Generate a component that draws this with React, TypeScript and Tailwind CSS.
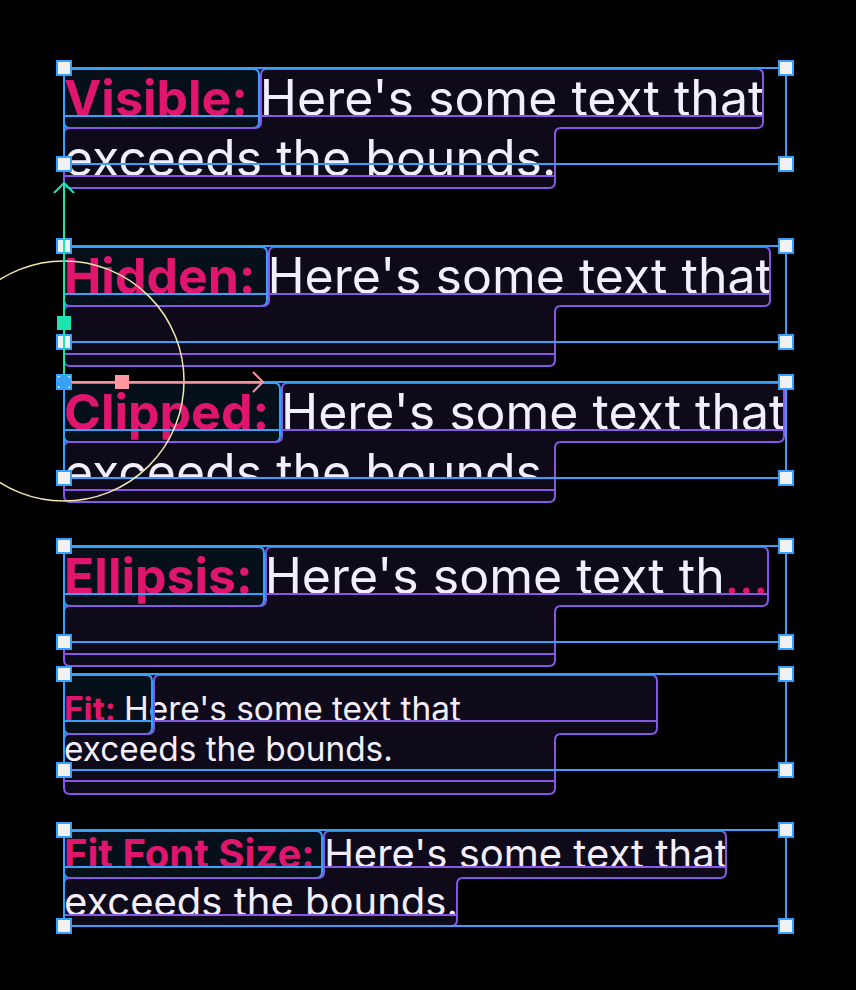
import type { ReactNode } from 'react';

type Pt = [number, number];

// rounded polygon: every corner gets a small quadratic curve
const roundPath = (pts: Pt[], r: number) => {
  const n = pts.length;
  let d = '';
  pts.forEach((p, i) => {
    const prev = pts[(i - 1 + n) % n];
    const next = pts[(i + 1) % n];
    const toward = (q: Pt): Pt => {
      const dx = q[0] - p[0];
      const dy = q[1] - p[1];
      const len = Math.hypot(dx, dy) || 1;
      const k = Math.min(r, len / 2) / len;
      return [p[0] + dx * k, p[1] + dy * k];
    };
    const a = toward(prev);
    const b = toward(next);
    d += `${i === 0 ? 'M' : 'L'}${a[0]},${a[1]} Q${p[0]},${p[1]} ${b[0]},${b[1]} `;
  });
  return d + 'Z';
};

const BLUE = '#37a0fb';
const PURPLE = '#8656e4';
const W = 722;
const H = 96;

interface Box {
  lx: number;   // end of the label span
  rx: number;   // end of the first line of the body span
  l2: number;   // end of the second line
  lh: number;   // line box height
  bl: number;   // baseline offset in a line box
}

function Block({ box, className, children }: { box: Box; className: string; children: ReactNode }) {
  const { lx, rx, l2, lh, bl } = box;
  const union = roundPath(
    [[lx + 1, 1], [rx, 1], [rx, lh], [l2, lh], [l2, lh * 2], [0, lh * 2], [0, lh], [lx + 1, lh]],
    6,
  );
  const label = roundPath([[0, 1], [lx - 1, 1], [lx - 1, lh], [0, lh]], 6);
  const corners: Pt[] = [[0, 0], [W, 0], [0, H], [W, H]];

  return (
    <div className={`relative w-[722px] h-[96px] shrink-0 ${className}`}>
      <svg className="absolute left-0 top-0 overflow-visible" width={W} height={H}>
        <path d={label} fill="#05101a" />
        <path d={union} fill="#0e0a19" />
      </svg>
      {children}
      <svg className="absolute left-0 top-0 overflow-visible" width={W} height={H}>
        <path d={label} fill="none" stroke={BLUE} strokeWidth={2} />
        <path d={union} fill="none" stroke={PURPLE} strokeWidth={2} />
        <line x1={0} y1={bl} x2={lx} y2={bl} stroke={BLUE} strokeWidth={2} />
        <line x1={lx} y1={bl} x2={rx} y2={bl} stroke={PURPLE} strokeWidth={2} />
        <line x1={0} y1={lh + bl} x2={l2} y2={lh + bl} stroke={PURPLE} strokeWidth={2} />
        <rect x={0} y={0} width={W} height={H} fill="none" stroke={BLUE} strokeWidth={2} />
        {corners.map(([x, y], i) => (
          <rect key={i} x={x - 7} y={y - 7} width={14} height={14} fill="#f1f1f3" stroke={BLUE} strokeWidth={2} />
        ))}
      </svg>
    </div>
  );
}

const Label = ({ children }: { children: string }) => (
  <span className="font-bold text-[#e0156d]">{children}</span>
);

const big = 'relative text-[50px] leading-[60px] whitespace-nowrap';

export default function App() {
  return (
    <div className="relative min-h-screen w-full bg-black overflow-hidden font-['Inter','Noto_Sans',sans-serif] text-[#f3eefc]">
      <div className="flex flex-col pl-[64px] pt-[68px]">
        <Block box={{ lx: 196, rx: 699, l2: 491, lh: 60, bl: 48 }} className="">
          <div className={big}>
            <div><Label>{'Visible: '}</Label>{"Here's some text that"}</div>
            <div>exceeds the bounds.</div>
          </div>
        </Block>

        <Block box={{ lx: 204, rx: 706, l2: 491, lh: 60, bl: 48 }} className="mt-[82px]">
          <div className={big}>
            <div><Label>{'Hidden: '}</Label>{"Here's some text that"}</div>
          </div>
        </Block>

        <Block box={{ lx: 217, rx: 720, l2: 491, lh: 60, bl: 48 }} className="mt-[40px]">
          <div className={`${big} h-[96px] overflow-hidden`}>
            <div><Label>{'Clipped: '}</Label>{"Here's some text that"}</div>
            <div>exceeds the bounds.</div>
          </div>
        </Block>

        <Block box={{ lx: 201, rx: 704, l2: 491, lh: 60, bl: 48 }} className="mt-[68px]">
          <div className={big}>
            <div>
              <Label>{'Ellipsis: '}</Label>{"Here's some text th"}
              <span className="text-[#e0156d]">…</span>
            </div>
          </div>
        </Block>

        <Block box={{ lx: 89, rx: 593, l2: 491, lh: 60, bl: 47 }} className="mt-[32px]">
          <div className="relative pt-[15px] text-[33.4px] leading-[40px] whitespace-nowrap">
            <div><Label>{'Fit: '}</Label>{"Here's some text that"}</div>
            <div>exceeds the bounds.</div>
          </div>
        </Block>

        <Block box={{ lx: 259, rx: 662, l2: 393, lh: 48, bl: 37 }} className="mt-[60px]">
          <div className="relative text-[40px] leading-[48px] whitespace-nowrap">
            <div><Label>{'Fit Font Size: '}</Label>{"Here's some text that"}</div>
            <div>exceeds the bounds.</div>
          </div>
        </Block>
      </div>

      {/* transform gizmo on the Clipped node */}
      <svg className="absolute inset-0 pointer-events-none" width={856} height={990}>
        <circle cx={64} cy={381} r={120} fill="none" stroke="#f2e6ae" strokeWidth={1.5} />
        <line x1={64} y1={183} x2={64} y2={381} stroke="#1fe2b1" strokeWidth={2} />
        <polyline points="54,193 64,183 74,193" fill="none" stroke="#1fe2b1" strokeWidth={2} />
        <rect x={57} y={316} width={14} height={14} fill="#1de3b0" />
        <line x1={64} y1={382} x2={263} y2={382} stroke="#f4939c" strokeWidth={2} />
        <polyline points="253,372 263,382 253,392" fill="none" stroke="#f4939c" strokeWidth={2} />
        <rect x={115} y={375} width={14} height={14} fill="#ff98a0" />
        <circle cx={64} cy={382} r={7} fill="#37a0fb" />
      </svg>
    </div>
  );
}
